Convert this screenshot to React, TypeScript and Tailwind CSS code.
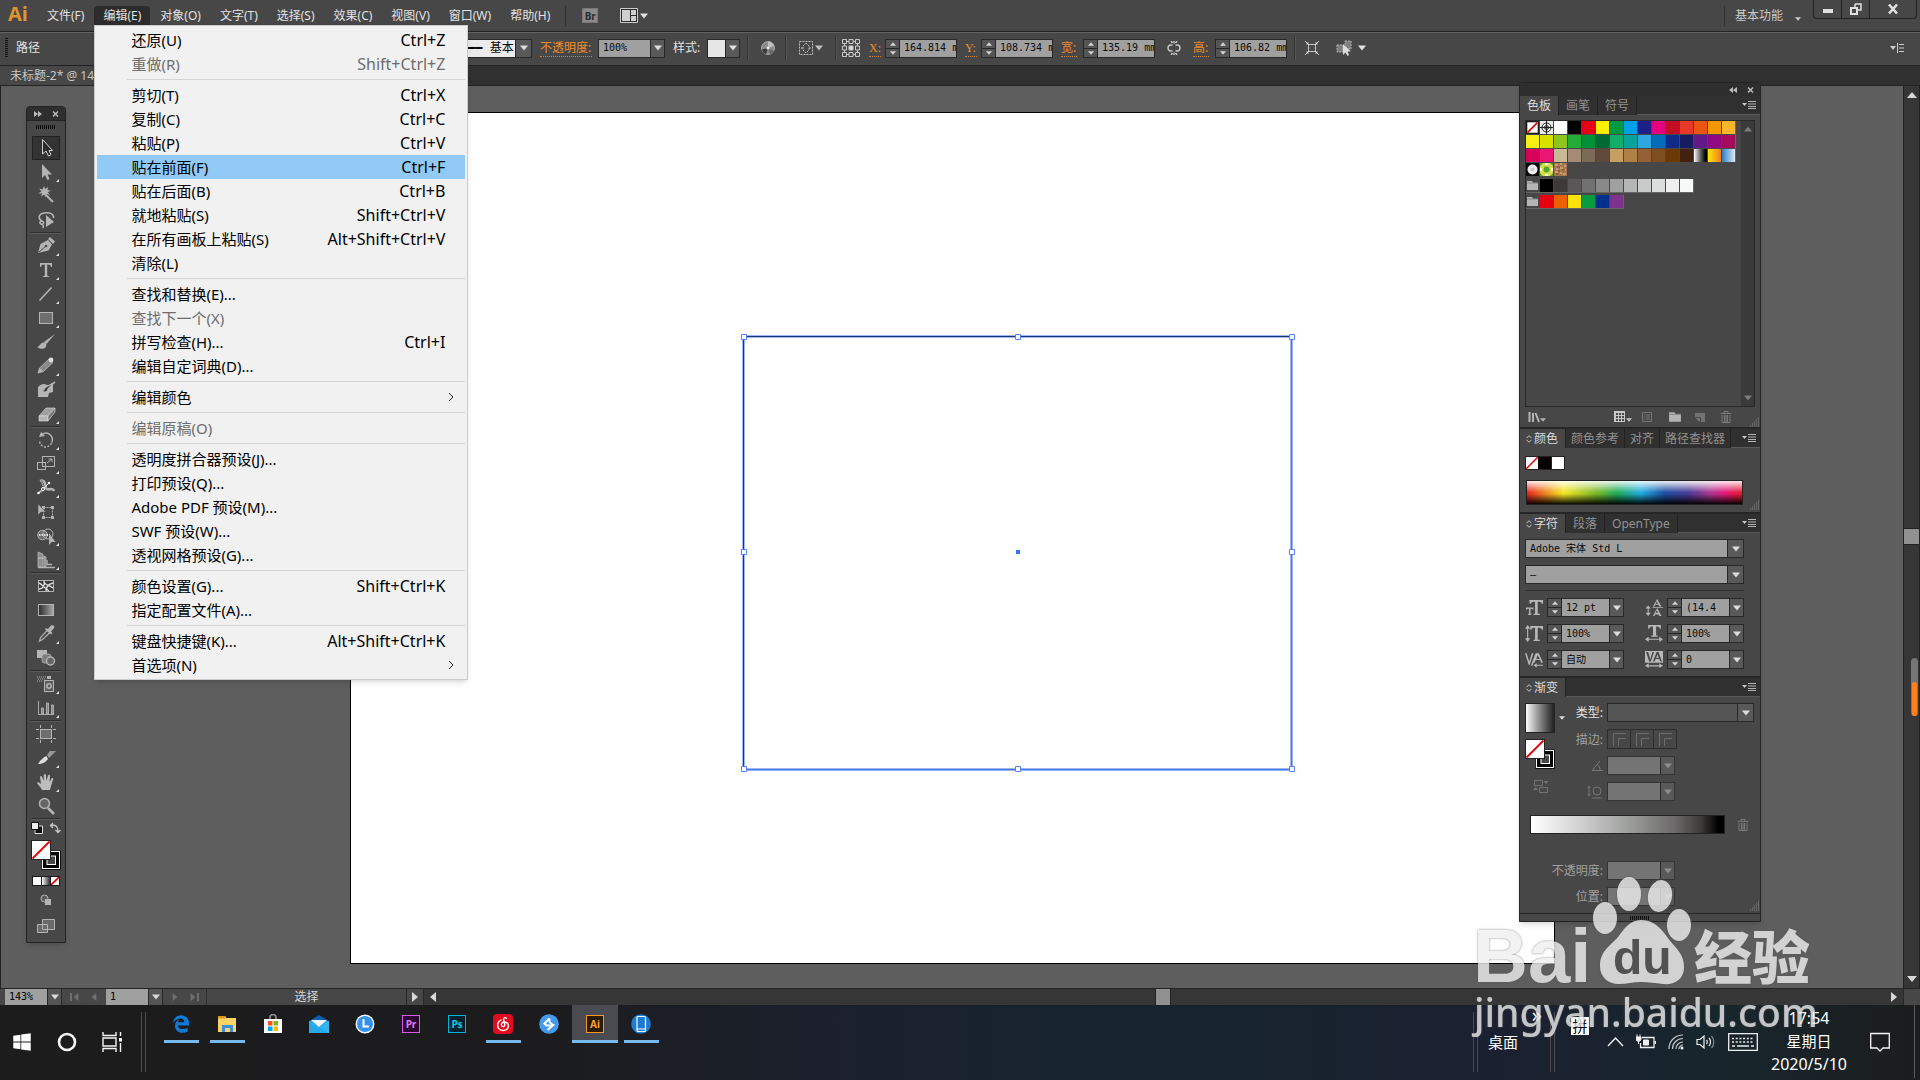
import React from 'react';
import { FaEdgeLegacy, FaWindows } from 'react-icons/fa';
import { SiNeteasecloudmusic } from 'react-icons/si';
import clsx from 'clsx';

type MenuEntry = { label: string; keys?: string; disabled?: boolean; active?: boolean; sub?: boolean };

const MENUS = ['文件(F)', '编辑(E)', '对象(O)', '文字(T)', '选择(S)', '效果(C)', '视图(V)', '窗口(W)', '帮助(H)'];

const EDIT_MENU: MenuEntry[][] = [
  [
    { label: '还原(U)', keys: 'Ctrl+Z' },
    { label: '重做(R)', keys: 'Shift+Ctrl+Z', disabled: true },
  ],
  [
    { label: '剪切(T)', keys: 'Ctrl+X' },
    { label: '复制(C)', keys: 'Ctrl+C' },
    { label: '粘贴(P)', keys: 'Ctrl+V' },
    { label: '贴在前面(F)', keys: 'Ctrl+F', active: true },
    { label: '贴在后面(B)', keys: 'Ctrl+B' },
    { label: '就地粘贴(S)', keys: 'Shift+Ctrl+V' },
    { label: '在所有画板上粘贴(S)', keys: 'Alt+Shift+Ctrl+V' },
    { label: '清除(L)' },
  ],
  [
    { label: '查找和替换(E)...' },
    { label: '查找下一个(X)', disabled: true },
    { label: '拼写检查(H)...', keys: 'Ctrl+I' },
    { label: '编辑自定词典(D)...' },
  ],
  [{ label: '编辑颜色', sub: true }],
  [{ label: '编辑原稿(O)', disabled: true }],
  [
    { label: '透明度拼合器预设(J)...' },
    { label: '打印预设(Q)...' },
    { label: 'Adobe PDF 预设(M)...' },
    { label: 'SWF 预设(W)...' },
    { label: '透视网格预设(G)...' },
  ],
  [
    { label: '颜色设置(G)...', keys: 'Shift+Ctrl+K' },
    { label: '指定配置文件(A)...' },
  ],
  [
    { label: '键盘快捷键(K)...', keys: 'Alt+Shift+Ctrl+K' },
    { label: '首选项(N)', sub: true },
  ],
];

const SWATCH_ROWS: string[][] = [
  [
    'bg-white', 'bg-black', 'bg-[#e60012]', 'bg-[#fff100]', 'bg-[#009944]', 'bg-[#00a0e9]', 'bg-[#1d2088]',
    'bg-[#e4007f]', 'bg-[#c30d23]', 'bg-[#e83828]', 'bg-[#ea5514]', 'bg-[#f39800]', 'bg-[#f8b62d]',
  ],
  [
    'bg-[#f8ee15]', 'bg-[#d9e000]', 'bg-[#8fc31f]', 'bg-[#22ac38]', 'bg-[#009139]', 'bg-[#006934]', 'bg-[#13ae67]',
    'bg-[#0ba29a]', 'bg-[#2ea7e0]', 'bg-[#036eb7]', 'bg-[#102a87]', 'bg-[#171c61]', 'bg-[#601986]', 'bg-[#920783]',
    'bg-[#a40b5d]',
  ],
  [
    'bg-[#d7005b]', 'bg-[#e91674]', 'bg-[#c9ba96]', 'bg-[#a48b78]', 'bg-[#7a6a56]', 'bg-[#604a3b]', 'bg-[#c69f62]',
    'bg-[#b08146]', 'bg-[#956134]', 'bg-[#7e4e21]', 'bg-[#6a3906]', 'bg-[#41210f]',
    'bg-linear-to-r from-white to-black',
    'bg-linear-to-r from-[#ffe600] to-[#ee7b1a]',
    'bg-linear-to-r from-[#1f7fc4] to-[#dcebf5]',
  ],
];

const GRAYS = [
  'bg-black', 'bg-[#3e3a39]', 'bg-[#595757]', 'bg-[#727171]', 'bg-[#898989]', 'bg-[#9fa0a0]', 'bg-[#b5b5b6]',
  'bg-[#c9caca]', 'bg-[#dcdddd]', 'bg-[#efefef]', 'bg-[#f7f8f8]',
];

const BRIGHTS = ['bg-[#e60012]', 'bg-[#eb6100]', 'bg-[#ffe20c]', 'bg-[#0a9a3f]', 'bg-[#00308d]', 'bg-[#7f318e]'];

/* ---------- tool icons, drawn in a 28x24 box ---------- */

const G = '#b4b4b4';

const TOOLS: { name: string; flyout?: boolean; selected?: boolean; icon: React.ReactNode }[][] = [
  [
    { name: '选择工具', selected: true, icon: <path d="M10.500 3.500V18l3.500-3 2.500 5 2.500-1.300-2-4.200h3.500z" fill="#2a2a2a" stroke="#d0d0d0" /> },
    { name: '直接选择工具', flyout: true, icon: <path d="M10 4v14l3-3 2.500 5 2-1-2-4.500h4.500z" fill={G} /> },
    {
      name: '魔棒工具',
      icon: (
        <g>
          <path d="M12 2l1.200 3 3-2-.8 3.200 3.600.3-3.200 1.700 2.200 3-3.300-1.200-.7 3.500-1.900-3-3 2.200 1-3.500-4.100.2 3.400-2-2.200-3 3.500 1z" fill={G} />
          <path d="M14 11l7 7" stroke={G} strokeWidth="2" />
        </g>
      ),
    },
    {
      name: '套索工具',
      icon: (
        <g fill="none" stroke={G} strokeWidth="1.600">
          <path d="M10 13c-4-2-4-7 2-8s10 1 9.500 5M10 13c-2 0-3 2-1 3s3 1 2 4M10 13c2 1 2 2 1 3" />
          <path d="M14 7v12l8-5z" fill={G} stroke="none" />
        </g>
      ),
    },
  ],
  [
    {
      name: '钢笔工具',
      flyout: true,
      icon: (
        <g fill={G}>
          <path d="M6 19l2.500-9L16 6l4 4.500-3.500 6z" />
          <path d="M16 5l2-2 5 4.500-2 2.500z" />
          <path d="M6.500 18.500L14 12" stroke="#474747" />
          <circle cx="14" cy="12" r="1.300" fill="#474747" />
        </g>
      ),
    },
    { name: '文字工具', flyout: true, icon: <path d="M8 5h12v4h-1c-.4-2-1-2.600-3.800-2.600V17c0 1 .6 1.200 2 1.300V19h-6.400v-.7c1.400-.1 2-.3 2-1.300V6.400C10 6.400 9.400 7 9 9H8z" fill={G} /> },
    { name: '直线段工具', flyout: true, icon: <path d="M7.500 18.500l12-13" stroke={G} strokeWidth="1.600" /> },
    { name: '矩形工具', flyout: true, icon: <rect x="7.500" y="6.500" width="13" height="11" fill="#6f6f6f" stroke={G} /> },
    {
      name: '画笔工具',
      icon: (
        <g fill={G}>
          <path d="M23 4l-8.500 10-2.500-2z" />
          <path d="M5 17c3 0 3-4.500 6.500-4.500 2.500 0 3.500 2 2.500 4-1.500 3-6 3-9 .5z" />
        </g>
      ),
    },
    {
      name: '铅笔工具',
      flyout: true,
      icon: (
        <g>
          <path d="M6 19l1.500-5L17 5l4 3.500-9.500 9z" fill="#8a8a8a" stroke={G} strokeWidth=".8" />
          <circle cx="19" cy="6" r="2.400" fill="#dedede" />
          <path d="M6 19l1.500-5 4 3.500z" fill={G} />
        </g>
      ),
    },
    {
      name: '斑点画笔工具',
      icon: (
        <g>
          <path d="M6 9c3-3 6-4 9-2h6v7l-4 1-1 4H6z" fill={G} />
          <path d="M23 4l-7 7c0 3-4 4-6 2 2 0 2-3 4-4z" fill="#3a3a3a" stroke={G} strokeWidth="1.200" />
        </g>
      ),
    },
    {
      name: '橡皮擦工具',
      flyout: true,
      icon: (
        <g stroke="#ddd" strokeWidth=".6">
          <path d="M7 14l7-8h9l-7 8z" fill="#a0a0a0" />
          <path d="M7 14h9v5H7z" fill={G} />
          <path d="M16 14l7-8v4l-7 9z" fill="#777" />
        </g>
      ),
    },
  ],
  [
    {
      name: '旋转工具',
      flyout: true,
      icon: (
        <g>
          <path d="M10 6.500c6-4 12 2 10 8" fill="none" stroke={G} strokeWidth="1.500" />
          <path d="M19.500 15c-3 6-11 5-12-2" fill="none" stroke={G} strokeWidth="1.500" strokeDasharray="2 1.500" />
          <path d="M7 9l2-5 4 4z" fill={G} />
        </g>
      ),
    },
    {
      name: '比例缩放工具',
      flyout: true,
      icon: (
        <g fill="none" stroke={G}>
          <rect x="10.500" y="4.500" width="12" height="10" />
          <rect x="5.500" y="10.500" width="8" height="7" />
          <path d="M15 11l5-4m-3.500 0h3.500v3" />
        </g>
      ),
    },
    {
      name: '宽度工具',
      flyout: true,
      icon: (
        <g>
          <path d="M8 5c5-2 5 3 6 7s6-2 8 3" fill="none" stroke={G} strokeWidth="2.500" />
          <path d="M10 4c-2 4 3 5 2 9s-4 1-5 4" fill="none" stroke="#8a8a8a" strokeWidth="2" />
          <path d="M6.500 17L17 7" stroke="#e5e5e5" />
          <circle cx="6.500" cy="17" r="1.300" fill="#fff" />
          <circle cx="11" cy="13" r="1.500" fill="#555" stroke="#fff" />
          <circle cx="17" cy="7" r="1.300" fill="#fff" />
        </g>
      ),
    },
    {
      name: '自由变换工具',
      icon: (
        <g>
          <rect x="11.500" y="7.500" width="9" height="10" fill="none" stroke={G} strokeDasharray="2 1" />
          <path d="M10 6h3v3h-3zM19 6h3v3h-3zM19 16h3v3h-3zM10 16h3v3h-3z" fill={G} />
          <path d="M6 4v11l3-3h5z" fill={G} stroke="#474747" strokeWidth=".5" />
        </g>
      ),
    },
    {
      name: '形状生成器工具',
      flyout: true,
      icon: (
        <g>
          <circle cx="10.500" cy="11" r="4.800" fill="#6f6f6f" stroke={G} />
          <circle cx="16" cy="10" r="5" fill="none" stroke={G} />
          <path d="M7 11h9" stroke="#fff" strokeWidth="1.500" strokeDasharray="1.500 1" />
          <path d="M17 9v12l2.500-3h4z" fill={G} />
        </g>
      ),
    },
    {
      name: '透视网格工具',
      flyout: true,
      icon: (
        <g>
          <path d="M6 4l5 2v13H6zM12 8l2 1v10h-2z" fill="#8e8e8e" stroke={G} strokeWidth=".8" />
          <path d="M6 10h7M15 12v4.500h5M17.500 14v0M14 19.500h9M6 19.500h17" fill="none" stroke={G} strokeWidth="1.300" />
        </g>
      ),
    },
  ],
  [
    {
      name: '网格工具',
      icon: (
        <g fill="none" stroke={G}>
          <rect x="6.500" y="6.500" width="15" height="11" fill="#3a3a3a" />
          <path d="M7 15c4 0 6-3 5-8M12 8c1 4 4 2 9 6M14 17c0-4 3-7 7-8M7 9c3 1 4 4 10 8" stroke="#dcdcdc" strokeWidth="1.400" />
        </g>
      ),
    },
    {
      name: '渐变工具',
      icon: (
        <g>
          <defs>
            <linearGradient id="toolGrad">
              <stop offset="0" stopColor="#2a2a2a" />
              <stop offset="1" stopColor="#aaa" />
            </linearGradient>
          </defs>
          <rect x="6.500" y="6.500" width="15" height="11" fill="url(#toolGrad)" stroke={G} />
        </g>
      ),
    },
    {
      name: '吸管工具',
      flyout: true,
      icon: (
        <g>
          <path d="M7.500 19l1-3.500L15.500 8l2.500 2.500-7.500 7z" fill="#474747" stroke={G} strokeWidth="1.200" />
          <path d="M14 6l2 1 3-3.500c3-1 4 1 3 2.500L19 9.500l1.500 1.500-1.500 1.500L13 7.500z" fill={G} />
        </g>
      ),
    },
    {
      name: '混合工具',
      icon: (
        <g>
          <path d="M5 4h10v8H5z" fill={G} />
          <rect x="10" y="8" width="9" height="9" rx="2.500" fill="#7d7d7d" stroke={G} strokeWidth=".8" />
          <circle cx="18.500" cy="15" r="4" fill="#666" stroke={G} strokeWidth="1.400" />
        </g>
      ),
    },
  ],
  [
    {
      name: '符号喷枪工具',
      flyout: true,
      icon: (
        <g>
          <path d="M5 5h9M6 7h8M5 9h5" stroke={G} strokeWidth="1.200" strokeDasharray="1 1" />
          <rect x="15" y="4" width="4" height="3" fill={G} />
          <rect x="12.500" y="8.500" width="9" height="11" fill="#5c5c5c" stroke={G} />
          <circle cx="17" cy="14" r="2.200" fill="none" stroke={G} strokeWidth="1.500" />
        </g>
      ),
    },
    {
      name: '柱形图工具',
      flyout: true,
      icon: (
        <g stroke={G} fill="#888" strokeWidth=".9">
          <path d="M6.500 5v13.500H22" fill="none" />
          <path d="M9.500 12h2v6h-2zM14.500 7h2v11h-2zM19.500 9h2v9h-2z" />
        </g>
      ),
    },
  ],
  [
    {
      name: '画板工具',
      icon: (
        <g stroke={G} fill="none">
          <rect x="8.500" y="7.500" width="11" height="9" fill="#6f6f6f" />
          <path d="M8.500 3v3M19.500 3v3M8.500 18v3M19.500 18v3M4 7.500h3M21 7.500h3M4 16.500h3M21 16.500h3" />
        </g>
      ),
    },
    {
      name: '切片工具',
      flyout: true,
      icon: (
        <g>
          <path d="M6 18c2-4 6-7 8.500-8l1.500 3c-3 4-6 5-10 5z" fill="#dcdcdc" />
          <path d="M15 9l3-4h6l-7 7z" fill="#999" />
        </g>
      ),
    },
    {
      name: '抓手工具',
      flyout: true,
      icon: (
        <path
          d="M10 20c-1-3-4-5-5-7 .5-1.500 2-1 4 1L8 7c.5-1.500 1.800-1.200 2.200.2L11.500 11l.3-6c.4-1.500 1.800-1.500 2.200 0l.4 6 1.600-5.500c.6-1.300 2-1 2 .5L17.500 12l2-3.500c.8-1 2-.4 1.700.8L19 16l-1 4z"
          fill="#bdbdbd"
        />
      ),
    },
    {
      name: '缩放工具',
      icon: (
        <g>
          <path d="M16 14l6 6" stroke={G} strokeWidth="2.600" />
          <circle cx="12.500" cy="9.500" r="5" fill="#666" stroke={G} strokeWidth="1.500" />
        </g>
      ),
    },
  ],
];

const NoneMark: React.FC<{ className: string }> = ({ className }) => (
  <svg className={className} viewBox="0 0 20 20" aria-hidden="true">
    <rect x="1" y="1" width="18" height="18" fill="#fff" stroke="#1a1a1a" strokeWidth="2" />
    <path d="M2.500 17.500l15-15" stroke="#e80000" strokeWidth="2.500" />
  </svg>
);

const FillStroke: React.FC = () => (
  <svg className="h-[30px] w-[30px]" viewBox="0 0 30 30" aria-hidden="true">
    <rect x="11" y="11" width="18.500" height="18.500" fill="#fff" stroke="#111" />
    <rect x="12" y="12" width="16.500" height="16.500" fill="#000" />
    <rect x="11.500" y="11.500" width="17" height="17" fill="none" stroke="#fff" />
    <rect x="16" y="16" width="8.500" height="8.500" fill="#474747" stroke="#fff" />
    <rect x=".5" y=".5" width="19" height="19" fill="#fff" stroke="#222" />
    <path d="M1.500 18.500l17-17" stroke="#e80000" strokeWidth="1.800" />
  </svg>
);

const Tri: React.FC<{ dir?: 'down' | 'up' | 'left' | 'right'; className?: string }> = ({ dir = 'down', className }) => {
  const d = { down: 'M0 2h10L5 8z', up: 'M0 8h10L5 2z', left: 'M8 0v10L2 5z', right: 'M2 0v10l6-5z' }[dir];
  return (
    <svg className={clsx('shrink-0 fill-current', className ?? 'size-2')} viewBox="0 0 10 10" aria-hidden="true">
      <path d={d} />
    </svg>
  );
};

const Grip: React.FC = () => (
  <svg className="h-1 w-5" viewBox="0 0 20 4" aria-hidden="true">
    <path d="M0 2h20" stroke="#0d0d0d" strokeWidth="4" strokeDasharray="1 1" />
  </svg>
);

const Corner: React.FC = () => (
  <svg className="size-2.5" viewBox="0 0 10 10" aria-hidden="true">
    <path d="M9 1h1M7 3h3M5 5h5M3 7h7M1 9h9" stroke="#858585" strokeDasharray="1 1" />
  </svg>
);

/* ---------- form fields ---------- */

interface FieldProps {
  id: string;
  label?: string;
  value: string;
  width: string;
  spinner?: boolean;
  dropdown?: boolean;
  dim?: boolean;
}

const Field: React.FC<FieldProps> = ({ id, label, value, width, spinner, dropdown, dim }) => (
  <div className={clsx('flex h-[19px] shrink-0 border', width, dim ? 'border-[#343434]' : 'border-[#282828]')}>
    {spinner && (
      <div className="flex w-3.5 shrink-0 flex-col border-r border-[#282828] bg-[#555] text-[#d5d5d5]">
        <button type="button" aria-label="增加" className="flex flex-1 items-center justify-center border-b border-[#282828]">
          <Tri dir="up" className="size-1.5" />
        </button>
        <button type="button" aria-label="减少" className="flex flex-1 items-center justify-center">
          <Tri className="size-1.5" />
        </button>
      </div>
    )}
    <input
      id={id}
      aria-label={label}
      defaultValue={value}
      disabled={dim}
      className={clsx(
        "min-w-0 flex-1 pl-1 font-['DejaVu_Sans_Mono','Noto_Sans_CJK_SC',monospace] text-[10px] leading-4 text-[#0a0a0a] outline-none",
        dim ? 'bg-[#747474]' : 'bg-[#a0a0a0]',
      )}
    />
    {dropdown && (
      <button
        type="button"
        aria-label="展开"
        className={clsx(
          'flex w-3.5 shrink-0 items-center justify-center border-l border-[#282828] bg-[#595959]',
          dim ? 'text-[#8d8d8d]' : 'text-[#dcdcdc]',
        )}
      >
        <Tri />
      </button>
    )}
  </div>
);

const Picker: React.FC<{ id: string; label: string; value: string; width: string; tone: string }> = ({ id, label, value, width, tone }) => (
  <div className={clsx('relative h-[19px] shrink-0 border border-[#282828] bg-[#a0a0a0]', width)}>
    <select
      id={id}
      aria-label={label}
      className={clsx(
        "block h-full w-full appearance-none px-1 font-['DejaVu_Sans_Mono','Noto_Sans_CJK_SC',monospace] leading-4 text-[#0a0a0a] outline-none",
        tone,
      )}
    >
      <option>{value}</option>
    </select>
    <span className="pointer-events-none absolute inset-y-0 right-0 flex w-4 items-center justify-center border-l border-[#282828] bg-[#595959] text-[#dcdcdc]">
      <Tri />
    </span>
  </div>
);

/* ---------- top bars ---------- */

const EditMenu: React.FC = () => (
  <div role="menu" className="absolute left-0 top-full z-30 w-[374px] border border-[#ccc] bg-[#f1f1f1] p-0.5 text-[15px] text-black shadow-md">
    {EDIT_MENU.map((group, gi) => (
      <div key={gi}>
        {gi > 0 && <div className="my-[3px] ml-[30px] h-px bg-[#d5d5d5]" />}
        {group.map((item) => (
          <button
            key={item.label}
            type="button"
            role="menuitem"
            disabled={item.disabled}
            className={clsx(
              'flex h-6 w-full items-center justify-between pl-[34px] pr-5 leading-[22px]',
              item.active && 'bg-[#91c9f7]',
              item.disabled && 'text-[#6d6d6d]',
            )}
          >
            <span>{item.label}</span>
            {item.keys && <span className="text-base leading-[22px]">{item.keys}</span>}
            {item.sub && (
              <svg className="-mr-3 size-3" viewBox="0 0 12 12" fill="none" stroke="#222" aria-hidden="true">
                <path d="M4 2l4 4-4 4" />
              </svg>
            )}
          </button>
        ))}
      </div>
    ))}
  </div>
);

const MenuBar: React.FC = () => (
  <header className="flex h-8 shrink-0 items-center border-b border-[#242424] bg-[#474747] text-xs text-[#e2e2e2]">
    <div className="w-[38px] shrink-0 pl-2 pb-1 font-['Open_Sans',sans-serif] text-xl font-bold leading-6 text-[#dd962f]">Ai</div>
    <nav className="flex gap-px">
      {MENUS.map((m) => (
        <div key={m} className="relative">
          <button
            type="button"
            className={clsx('h-[19px] whitespace-nowrap px-[9px] leading-[19px]', m === '编辑(E)' && 'rounded-t-sm bg-[#2c2c2c]')}
          >
            {m}
          </button>
          {m === '编辑(E)' && <EditMenu />}
        </div>
      ))}
    </nav>
    <div className="ml-1.5 h-5 w-px bg-[#303030]" />
    <button type="button" aria-label="Bridge" className="ml-4 h-[15px] w-4 border border-[#777] bg-[#8b8b8b] text-[10px] font-bold leading-3 text-[#2d2d2d]">
      Br
    </button>
    <button type="button" aria-label="排列文档" className="ml-[22px] flex items-center gap-0.5">
      <svg className="h-[15px] w-[18px]" viewBox="0 0 18 15" aria-hidden="true">
        <path d="M.5.5h17v14H.5z" fill="#2b2b2b" stroke="#ccc" />
        <path d="M2 2h8v11H2zM11 2h5v5h-5zM11 8h5v5h-5z" fill="#cfcfcf" />
      </svg>
      <Tri />
    </button>
    <div className="ml-auto h-5 w-px bg-[#303030]" />
    <button type="button" className="ml-2.5 flex items-end text-[#cacaca]">
      基本功能
      <Tri className="mb-0.5 ml-3 size-1.5" />
    </button>
    <div className="ml-3 mr-[3px] flex h-[19px] self-start overflow-hidden rounded-b border border-t-0 border-[#222] text-[#e0e0e0]">
      <button type="button" aria-label="最小化" className="flex w-7 items-center justify-center border-r border-[#222]">
        <svg className="size-3" viewBox="0 0 12 12" aria-hidden="true"><path d="M1 6h10v4H1z" fill="currentColor" /></svg>
      </button>
      <button type="button" aria-label="还原" className="flex w-7 items-center justify-center border-r border-[#222]">
        <svg className="size-3.5" viewBox="0 0 14 14" fill="none" stroke="currentColor" strokeWidth="1.500" aria-hidden="true">
          <path d="M6 2h6v6H9M6 2v3" />
          <path d="M2 6h6v6H2z" strokeWidth="2" />
        </svg>
      </button>
      <button type="button" aria-label="关闭" className="flex w-[46px] items-center justify-center">
        <svg className="size-3" viewBox="0 0 12 12" stroke="currentColor" strokeWidth="2.600" aria-hidden="true"><path d="M2 1.500l8 9M10 1.500l-8 9" /></svg>
      </button>
    </div>
  </header>
);

const OrangeLabel: React.FC<{ htmlFor: string; className: string; children: React.ReactNode }> = ({ htmlFor, className, children }) => (
  <label htmlFor={htmlFor} className={clsx('shrink-0 border-b border-dotted border-[#d0812c] leading-4 text-[#ee8c2b]', className)}>
    {children}
  </label>
);

const Divider: React.FC<{ className?: string }> = ({ className }) => (
  <div className={clsx('h-6 w-0.5 shrink-0 border-r border-[#565656] bg-[#333]', className)} />
);

const ControlBar: React.FC = () => (
  <div className="flex h-[34px] shrink-0 items-center overflow-hidden border-b border-t border-b-[#222] border-t-[#636363] bg-[#474747] pb-0.5 pl-[5px] text-xs text-[#e2e2e2]">
    <svg className="h-5 w-[3px] shrink-0" viewBox="0 0 3 20" aria-hidden="true">
      <path d="M1.500 0v20" stroke="#111" strokeWidth="3" strokeDasharray="1 1" />
    </svg>
    <span className="ml-2 w-[447px] shrink-0">路径</span>
    <Picker id="profile" label="画笔定义" value="━━ 基本" width="w-[69px]" tone="bg-[#ececec] text-xs" />
    <OrangeLabel htmlFor="opacity" className="ml-2 w-[52px]">不透明度:</OrangeLabel>
    <div className="ml-1.5"><Field id="opacity" value="100%" width="w-[67px]" dropdown /></div>
    <label htmlFor="style" className="ml-2 w-[30px] shrink-0">样式:</label>
    <div className="ml-1 flex h-[19px] shrink-0 border border-[#282828]">
      <button id="style" type="button" aria-label="图形样式" className="w-[17px] bg-[#e6e6e6]" />
      <button type="button" aria-label="展开" className="flex w-3.5 items-center justify-center border-l border-[#282828] bg-[#595959]">
        <Tri />
      </button>
    </div>
    <Divider className="ml-[7px]" />
    <button type="button" aria-label="重新着色图稿" className="ml-3 shrink-0">
      <svg className="size-3.5" viewBox="0 0 14 14" aria-hidden="true">
        <circle cx="7" cy="7" r="6.500" fill="#8a8a8a" stroke="#a5a5a5" />
        <path d="M7 7V.5A6.500 6.500 0 0 1 13 5z" fill="#c0c0c0" />
        <path d="M7 7l-6.300 1.500A6.500 6.500 0 0 0 5 13.200z" fill="#3c3c3c" />
        <path d="M7 7l6 3a6.500 6.500 0 0 1-4 3.200z" fill="#696969" />
        <circle cx="7" cy="7" r="1.500" fill="#eee" />
      </svg>
    </button>
    <Divider className="ml-2.5" />
    <button type="button" aria-label="对齐" className="ml-3 flex shrink-0 items-center gap-0.5 text-[#bdbdbd]">
      <svg className="size-3.5" viewBox="0 0 14 14" fill="none" stroke="currentColor" aria-hidden="true">
        <rect x=".5" y=".5" width="13" height="13" strokeDasharray="2 1" />
        <path d="M7 2l3 3v4l-3 3-3-3V5zM2 7h2M10 7h2" strokeDasharray="2 1" />
      </svg>
      <Tri />
    </button>
    <Divider className="ml-3" />
    <svg className="ml-1 size-5 shrink-0" viewBox="0 0 20 20" fill="none" stroke="#c8c8c8" aria-hidden="true">
      <path d="M1.500 1.500h4v4h-4zM8 1.500h4v4H8zM14.500 1.500h4v4h-4zM1.500 8h4v4h-4zM14.500 8h4v4h-4zM1.500 14.500h4v4h-4zM8 14.500h4v4H8zM14.500 14.500h4v4h-4z" />
      <path d="M8 8h4v4H8z" fill="#ddd" />
      <path d="M5.500 3.500H8M12 3.500h2.500M5.500 16.500H8M12 16.500h2.500M3.500 5.500V8M3.500 12v2.500M16.500 5.500V8M16.500 12v2.500" />
    </svg>
    <OrangeLabel htmlFor="x" className="ml-2 w-3 font-['Liberation_Serif',serif]">X:</OrangeLabel>
    <div className="ml-1"><Field id="x" value="164.814 mm" width="w-[72px]" spinner /></div>
    <OrangeLabel htmlFor="y" className="ml-2 w-3 font-['Liberation_Serif',serif]">Y:</OrangeLabel>
    <div className="ml-1"><Field id="y" value="108.734 mm" width="w-[72px]" spinner /></div>
    <OrangeLabel htmlFor="w" className="ml-2 w-4">宽:</OrangeLabel>
    <div className="ml-1.5"><Field id="w" value="135.19 mm" width="w-[72px]" spinner /></div>
    <button type="button" aria-label="约束宽度和高度比例" className="ml-3 shrink-0">
      <svg className="size-3.5" viewBox="0 0 14 14" fill="none" stroke="#c8c8c8" strokeWidth="1.400" aria-hidden="true">
        <path d="M5.500 4H4a3 3 0 0 0 0 6h1.500M8.500 4H10a3 3 0 0 1 0 6H8.500M4 0l1.500 2M10 0L8.500 2M7 0v2.500M4 14l1.500-2M10 14l-1.500-2M7 14v-2.500" />
      </svg>
    </button>
    <OrangeLabel htmlFor="h" className="ml-3 w-4">高:</OrangeLabel>
    <div className="ml-1.5"><Field id="h" value="106.82 mm" width="w-[72px]" spinner /></div>
    <Divider className="ml-[7px]" />
    <button type="button" aria-label="变换" className="ml-2 shrink-0">
      <svg className="size-4" viewBox="0 0 16 16" fill="none" stroke="#c8c8c8" aria-hidden="true">
        <rect x="4.500" y="4.500" width="7" height="7" />
        <path d="M1 1l3 3M15 1l-3 3M1 15l3-3M15 15l-3-3M4 2v2H2M12 2v2h2M4 14v-2H2M12 14v-2h2" />
      </svg>
    </button>
    <button type="button" aria-label="选择类似的对象" className="ml-4 flex shrink-0 items-center gap-1.5">
      <svg className="size-4" viewBox="0 0 16 16" aria-hidden="true">
        <path d="M1 5h6v7H1zM9 1h6v8H9z" fill="#7d7d7d" stroke="#b0b0b0" strokeDasharray="2 1" />
        <path d="M7 4v11l2.500-2.500 2 3.500 1.500-1-1.500-3.500H15z" fill="#dcdcdc" />
      </svg>
      <Tri />
    </button>
    <svg className="ml-auto mr-4 h-3 w-3.5 shrink-0" viewBox="0 0 14 12" aria-hidden="true">
      <path d="M0 4h6L3 8z" fill="#ccc" />
      <path d="M7.500 1v10M9 2.500h5M9 6h5M9 9.500h5" stroke="#ccc" />
    </svg>
  </div>
);

/* ---------- floating panels ---------- */

const PanelTop: React.FC<{ left?: boolean }> = ({ left }) => (
  <div className="flex h-[13px] items-center justify-end gap-2.5 rounded-t bg-[#2e2e2e] pr-1.5 text-[#bbb]">
    <svg className="h-1.5 w-2" viewBox="0 0 8 6" aria-hidden="true">
      <path d={left ? 'M0 0v6l4-3zM4 0v6l4-3z' : 'M4 0v6L0 3zM8 0v6L4 3z'} fill="currentColor" />
    </svg>
    <svg className="h-1.5 w-[7px]" viewBox="0 0 7 6" aria-hidden="true">
      <path d="M1 .5l5 5M6 .5l-5 5" stroke="currentColor" strokeWidth="1.500" />
    </svg>
  </div>
);

const ToolsPanel: React.FC = () => (
  <aside className="absolute left-[25px] top-5 w-10 rounded-t border border-[#242424] bg-[#474747] shadow-md" aria-label="工具">
    <PanelTop left />
    <div className="flex h-4 justify-center border-t border-[#242424] pt-1"><Grip /></div>
    {TOOLS.map((group, i) => (
      <div key={i} className="flex flex-col items-center">
        {i > 0 && <div className="h-0.5 w-[30px] border-b border-[#5a5a5a] bg-[#2e2e2e]" />}
        {group.map((t) => (
          <button
            key={t.name}
            type="button"
            aria-label={t.name}
            className={clsx('flex h-6 w-7 items-center justify-center', t.selected && 'border border-[#222] bg-[#333]')}
          >
            <svg className="h-6 w-7 shrink-0" viewBox="0 0 28 24" aria-hidden="true">
              {t.icon}
              {t.flyout && <path d="M27 19v3h-3z" fill="#e0e0e0" />}
            </svg>
          </button>
        ))}
      </div>
    ))}
    <div className="mx-auto h-0.5 w-[30px] border-b border-[#5a5a5a] bg-[#2e2e2e]" />
    <div className="flex h-4 items-center justify-between px-1">
      <button type="button" aria-label="默认填色和描边">
        <svg className="size-3" viewBox="0 0 12 12" aria-hidden="true">
          <path d="M4 4h7.500v7.500H4z" fill="#111" stroke="#ddd" />
          <path d="M.5.5h7v7h-7z" fill="#eee" stroke="#111" />
        </svg>
      </button>
      <button type="button" aria-label="互换填色和描边">
        <svg className="size-3" viewBox="0 0 12 12" fill="none" stroke="#c8c8c8" strokeWidth="1.300" aria-hidden="true">
          <path d="M2 3.500c5-1 7 1 7 6M4 1L1.500 3.500 4 6M6.500 8L9 10.500 11.500 8" />
        </svg>
      </button>
    </div>
    <div className="mt-1 flex justify-center"><FillStroke /></div>
    <div className="mx-auto mt-1.5 flex h-2.5 w-7 border border-[#1a1a1a]">
      <button type="button" aria-label="颜色" className="flex-1 bg-white" />
      <button type="button" aria-label="渐变" className="flex-1 border-x border-[#1a1a1a] bg-linear-to-r from-white to-[#333]" />
      <button type="button" aria-label="无" className="flex-1">
        <svg className="h-2 w-2" viewBox="0 0 8 8" aria-hidden="true"><path d="M0 0h8v8H0z" fill="#fff" /><path d="M0 8l8-8" stroke="#e80000" strokeWidth="1.600" /></svg>
      </button>
    </div>
    <button type="button" aria-label="绘图模式" className="flex h-7 w-full items-center justify-center">
      <svg className="size-3" viewBox="0 0 12 12" aria-hidden="true">
        <circle cx="4.500" cy="4.500" r="3.500" fill="#5e5e5e" stroke={G} />
        <path d="M5 5h6v6H5z" fill={G} />
      </svg>
    </button>
    <button type="button" aria-label="更改屏幕模式" className="mb-1 flex h-6 w-full items-center justify-center">
      <svg className="h-[14px] w-[18px]" viewBox="0 0 18 14" fill="#6a6a6a" stroke={G} aria-hidden="true">
        <path d="M.5 5.500h10v8H.5zM5.500.5h12v10h-12z" />
      </svg>
    </button>
  </aside>
);

const PanelTabs: React.FC<{ tabs: string[]; cycle?: boolean; pad: string }> = ({ tabs, cycle, pad }) => (
  <div role="tablist" className="flex h-[19px] items-stretch bg-[#303030] text-xs leading-[18px] text-[#929292]">
    {tabs.map((t, i) => (
      <button
        key={t}
        type="button"
        role="tab"
        aria-selected={i === 0}
        className={clsx(
          'flex items-center whitespace-nowrap border-r border-[#222]',
          i === 0 && 'bg-[#474747] text-[#dcdcdc]',
          cycle && i === 0 ? 'gap-0.5 pl-1.5 pr-[7px]' : pad,
        )}
      >
        {cycle && i === 0 && (
          <svg className="h-2 w-[6px]" viewBox="0 0 6 8" fill="none" stroke="#c8c8c8" aria-hidden="true">
            <path d="M.5 3.200L3 .7l2.500 2.500M.5 4.800L3 7.300l2.500-2.500" />
          </svg>
        )}
        {t}
      </button>
    ))}
    <span className="flex flex-1 items-center justify-end border-b border-[#5a5a5a] pr-1">
      <svg className="h-2 w-3.5" viewBox="0 0 14 8" aria-hidden="true">
        <path d="M0 2h5L2.500 5z" fill="#c8c8c8" />
        <path d="M6 .5h8M6 3h8M6 5.500h8M6 7.500h8" stroke="#b5b5b5" />
      </svg>
    </span>
  </div>
);

const Swatch: React.FC<{ tone: string }> = ({ tone }) => (
  <button type="button" aria-label="色板" className={clsx('size-[13px]', tone)} />
);

const Folder: React.FC<{ className: string }> = ({ className }) => (
  <svg className={className} viewBox="0 0 13 13" aria-hidden="true">
    <path d="M1 2h5l1 2h5v7H1z" fill="#b5b5b5" />
    <path d="M1 4h11" stroke="#8a8a8a" />
  </svg>
);

const Trash: React.FC<{ className: string }> = ({ className }) => (
  <svg className={className} viewBox="0 0 12 12" fill="none" stroke="#7a7a7a" aria-hidden="true">
    <path d="M.5 2.500h11M4 2V.5h4V2M2 4v7.500h8V4M4.500 4v7M6 4v7M7.500 4v7" />
  </svg>
);

const SwatchesPanel: React.FC = () => (
  <section className="border-b-2 border-[#262626]">
    <PanelTabs tabs={['色板', '画笔', '符号']} pad="px-[7px]" />
    <div className="px-[5px] pt-[5px]">
      <div className="flex h-[287px] border border-[#2a2a2a]">
        <div className="flex flex-1 flex-col items-start">
          <div className="flex flex-col gap-px border-r border-[#666]">
            {SWATCH_ROWS.map((row, i) => (
              <div key={i} className="flex gap-px">
                {i === 0 && (
                  <>
                    <NoneMark className="size-[13px]" />
                    <svg className="size-[13px]" viewBox="0 0 13 13" fill="none" stroke="#222" aria-hidden="true">
                      <path d="M0 0h13v13H0z" fill="#e8e8e8" stroke="none" />
                      <circle cx="6.500" cy="6.500" r="4.500" />
                      <circle cx="6.500" cy="6.500" r="2" />
                      <path d="M6.500 0v13M0 6.500h13" />
                    </svg>
                  </>
                )}
                {row.map((c) => <Swatch key={c} tone={c} />)}
              </div>
            ))}
          </div>
          <div className="mt-px flex gap-px">
            <svg className="size-[13px]" viewBox="0 0 13 13" aria-hidden="true">
              <path d="M0 0h13v13H0z" fill="#0a0a0a" />
              <circle cx="6.500" cy="6.500" r="5" fill="#eee" />
              <circle cx="6.500" cy="6.500" r="2" fill="#ccc" />
            </svg>
            <svg className="size-[13px]" viewBox="0 0 13 13" aria-hidden="true">
              <path d="M0 0h13v13H0z" fill="#d3dc4c" />
              <circle cx="6.500" cy="6.500" r="3" fill="#55a82c" />
              <path d="M0 0h3l-3 3zM13 0v3l-3-3zM0 13v-3l3 3zM13 13h-3l3-3z" fill="#55a82c" />
              <path d="M5 0h3v2H5zM5 11h3v2H5zM0 5h2v3H0zM11 5h2v3h-2z" fill="#fff" />
            </svg>
            <svg className="size-[13px]" viewBox="0 0 13 13" aria-hidden="true">
              <path d="M0 0h13v13H0z" fill="#a8764d" />
              <path d="M1 2h3M6 1h2M10 3h2M2 6h2M6 5h3M11 7h1M1 9h3M6 10h2M9 11h3" stroke="#e0c4a8" />
              <path d="M3 4h3M8 7h2M4 8h2M2 11h2" stroke="#7a4a28" />
            </svg>
          </div>
          <div className="mt-[3px] flex gap-px border-b border-r border-[#666]">
            <Folder className="size-[13px]" />
            {GRAYS.map((c) => <Swatch key={c} tone={c} />)}
          </div>
          <div className="mt-0.5 flex gap-px border-b border-r border-[#666]">
            <Folder className="size-[13px]" />
            {BRIGHTS.map((c) => <Swatch key={c} tone={c} />)}
          </div>
        </div>
        <div className="flex w-[13px] flex-col items-center justify-between bg-[#3a3a3a] py-1 text-[#7c7c7c]">
          <Tri dir="up" />
          <Tri />
        </div>
      </div>
    </div>
    <div className="flex h-5 items-center pl-2 pr-px">
      <button type="button" aria-label="色板库" className="flex items-end text-[#b5b5b5]">
        <svg className="h-3 w-3" viewBox="0 0 12 12" fill="none" stroke="currentColor" strokeWidth="2" aria-hidden="true">
          <path d="M1.500 1v10M5 2v9M7.500 2l3.500 9" />
        </svg>
        <Tri className="size-1.5" />
      </button>
      <button type="button" aria-label="显示色板类型" className="ml-[68px] flex items-end text-[#c8c8c8]">
        <svg className="h-3 w-3" viewBox="0 0 12 12" aria-hidden="true">
          <path d="M0 0h11v11H0z" fill="currentColor" />
          <path d="M2 2h2v2H2zM5 2h2v2H5zM8 2h2v2H8zM2 5h2v2H2zM5 5h2v2H5zM2 8h2v2H2zM5 8h2v2H5zM8 8h2v2H8zM8 5h2v2H8z" fill="#4a4a4a" />
        </svg>
        <Tri className="size-1.5" />
      </button>
      <svg className="ml-2.5 size-2.5" viewBox="0 0 10 10" fill="none" stroke="#757575" aria-hidden="true">
        <path d="M.5.5h9v9h-9zM2 3h1M4 3h4M2 5h1M4 5h4M2 7h1M4 7h4" />
      </svg>
      <Folder className="ml-4 size-3.5" />
      <svg className="ml-3 size-3" viewBox="0 0 12 12" aria-hidden="true">
        <path d="M1 2h10v9H7V6H1z" fill="#727272" />
        <path d="M1 7h5v4z" fill="#727272" />
      </svg>
      <Trash className="ml-3.5 size-3" />
      <span className="ml-auto self-end"><Corner /></span>
    </div>
  </section>
);

const ColorPanel: React.FC = () => (
  <section className="border-b-2 border-[#262626]">
    <PanelTabs tabs={['颜色', '颜色参考', '对齐', '路径查找器']} cycle pad="px-[5px]" />
    <div className="relative px-[5px] pb-[7px] pt-2">
      <div className="flex h-3.5 w-10 border border-[#222]">
        <svg className="size-3" viewBox="0 0 12 12" aria-hidden="true">
          <path d="M0 0h12v12H0z" fill="#fff" />
          <path d="M0 12L12 0" stroke="#e80000" strokeWidth="1.500" />
        </svg>
        <button type="button" aria-label="黑色" className="flex-1 bg-[#060203]" />
        <button type="button" aria-label="白色" className="flex-1 border-l border-[#222] bg-white" />
      </div>
      <div className="ml-px mt-2.5 h-[25px] w-[217px] border border-[#222] bg-[linear-gradient(to_right,#e8251f,#f6e824_17%,#7fba28_32%,#20ad5b_42%,#20ace0_53%,#1d4fa3_64%,#4b3a97_75%,#a93a92_85%,#e5197f_92%,#e51c28)]">
        <div className="h-full bg-[linear-gradient(to_bottom,rgba(255,255,255,0.9),rgba(255,255,255,0)_50%,rgba(0,0,0,0)_55%,rgba(0,0,0,0.95))]" />
      </div>
      <span className="absolute bottom-0.5 right-px"><Corner /></span>
    </div>
  </section>
);

const CHAR_FIELDS: { id: string; label: string; value: string; icon: React.ReactNode }[] = [
  { id: 'size', label: '字体大小', value: '12 pt', icon: <path d="M4 1h13v3.500h-1C15.500 3 15 2.500 12 2.500V14h2v1H8v-1h1.500V2.500C6.500 2.500 6 3 5.500 4.500h-1zM1 8h7v2H7l-.5-.8H5.200V14H6v1H3v-1h.8V9.200H2.500L2 10H1z" /> },
  { id: 'leading', label: '行距', value: '(14.4', icon: <path d="M11.500 0l4 7h-2l-.7-1.500H9.500L9 7H7.500zM11 2l-1 2.500h2.300zM11.500 8.500l4 7.500h-2l-.7-1.500H9.500L9 16H7.500zM11 10.500L10 13h2.300zM7 7.500h10v.8H7zM3 6l2.500 3h-2v4h2L3 16 .5 13h2V9h-2z" /> },
  { id: 'vscale', label: '垂直缩放', value: '100%', icon: <path d="M5 1h12v3.500h-1C15.500 3 15 2.500 12 2.500V14h2v1H8v-1h1.500V2.500C7 2.500 6.500 3 6 4.500H5zM2.500 0L5 3.500H3v9h2L2.500 16 0 12.500h2v-9H0z" /> },
  { id: 'hscale', label: '水平缩放', value: '100%', icon: <path d="M3 0h12v3.500h-1c-.5-1.500-1-2-3.500-2V10H12v1H6v-1h1.500V1.500C5 1.500 4.500 2 4 3.500H3zM0 13.500L3.500 11v2h10v-2l3.500 2.500-3.500 2.500v-2h-10v2z" /> },
  { id: 'kern', label: '字偶间距', value: '自动', icon: <path d="M0 2h1.500l2.500 8 2.500-8H8l-3.500 11h-1zM10 2h1.500L7 14H5.500zM11.500 2h1.500l4 9h-1.800l-1-2.500H10L9 11H7.500zM12 4l-1.500 3.500H14zM8 13.500l3-2v1.500h6v1h-6v1.500z" /> },
  { id: 'track', label: '字符间距', value: '0', icon: <path fillRule="evenodd" d="M0 0h17v11H0zM1 1l3 9h1.500l3-9H7L5 8 3 1zM11 1L7.500 10H9l1-2.500h3.500l1 2.500H16L12.700 1zM11.800 3L13 6.500h-2.500zM0 14l3.500-2.500v2h10v-2L17 14l-3.500 2v-1.500h-10V16z" /> },
];

const CharacterPanel: React.FC = () => (
  <section className="border-b-2 border-[#262626]">
    <PanelTabs tabs={['字符', '段落', 'OpenType']} cycle pad="px-[7px]" />
    <div className="px-[5px] pb-[7px] pt-1.5">
      <Picker id="family" label="字体系列" value="Adobe 宋体 Std L" width="w-[219px]" tone="bg-[#a0a0a0] text-[10px]" />
      <div className="mt-[7px]">
        <Picker id="fontStyle" label="字体样式" value="–" width="w-[219px]" tone="bg-[#a0a0a0] text-[10px]" />
      </div>
      <div className="mt-1.5 h-px w-[219px] bg-[#303030]" />
      <div className="mt-[7px] grid w-[219px] grid-cols-[99px_99px] gap-x-[21px] gap-y-[7px]">
        {CHAR_FIELDS.map((f) => (
          <div key={f.id} className="flex items-center">
            <svg className="mr-1 h-[17px] w-[18px] shrink-0" viewBox="0 0 17 16" fill="#b8b8b8" aria-hidden="true">{f.icon}</svg>
            <Field id={f.id} label={f.label} value={f.value} width="w-[77px]" spinner dropdown />
          </div>
        ))}
      </div>
    </div>
  </section>
);

const GradientPanel: React.FC = () => (
  <section className="border-b border-[#262626]">
    <PanelTabs tabs={['渐变']} cycle pad="px-[7px]" />
    <div className="relative px-[5px] pb-[7px] pt-1.5 text-xs text-[#a0a0a0]">
      <div className="flex">
        <div className="w-10 shrink-0">
          <div className="flex items-center gap-1 text-[#ddd]">
            <button type="button" aria-label="渐变填色" className="h-[30px] w-[30px] border border-[#222] bg-linear-to-r from-white to-[#222]" />
            <Tri className="size-1.5" />
          </div>
          <div className="mt-1.5"><FillStroke /></div>
          <svg className="ml-2 mt-2.5 h-3.5 w-4" viewBox="0 0 16 14" fill="none" stroke="#737373" aria-hidden="true">
            <path d="M1.500 1.500h8v5h-8zM6.500 8.500h8v5h-8z" />
            <path d="M10.500 2h5L13 5zM0 11h5L2.500 8z" fill="#737373" stroke="none" />
          </svg>
        </div>
        <div className="grid flex-1 grid-cols-[38px_1fr] items-center gap-x-1 gap-y-[7px] leading-[19px]">
          <label htmlFor="gtype" className="whitespace-nowrap text-right text-[#e2e2e2]">类型:</label>
          <Picker id="gtype" label="类型" value="" width="w-[147px]" tone="bg-[#555] text-[10px]" />
          <span className="text-right">描边:</span>
          <div className="flex h-5 w-[70px] divide-x divide-[#2d2d2d] border border-[#2d2d2d]">
            {['在描边中应用渐变', '沿描边应用渐变', '跨描边应用渐变'].map((n) => (
              <button key={n} type="button" disabled aria-label={n} className="flex flex-1 items-center justify-center">
                <svg className="size-3.5" viewBox="0 0 14 14" fill="none" stroke="#6c6c6c" aria-hidden="true">
                  <path d="M1.500 14V1.500H14M6.500 14V6.500H14" />
                </svg>
              </button>
            ))}
          </div>
          <svg className="h-3 w-3 justify-self-end" viewBox="0 0 12 12" fill="none" stroke="#757575" aria-hidden="true">
            <path d="M9 1L1 10.500h11M6 4.500c2 1 3 3 3 6" />
          </svg>
          <Field id="angle" label="角度" value="" width="w-[68px]" dropdown dim />
          <svg className="h-3.5 w-4 justify-self-end" viewBox="0 0 16 14" fill="none" stroke="#757575" aria-hidden="true">
            <circle cx="10" cy="6" r="4" />
            <path d="M2 1v10M.5 3L2 1l1.500 2M.5 9L2 11l1.500-2M5 13h10" />
          </svg>
          <Field id="aspect" label="长宽比" value="" width="w-[68px]" dropdown dim />
        </div>
      </div>
      <div className="mt-3.5 flex items-center">
        <div className="ml-[5px] h-[19px] w-[195px] border border-[#222] bg-[linear-gradient(to_right,#fff,#c8c8c8_30%,#9a9c9a_52%,#6a6868_75%,#3e3a39_88%,#000_97%)]" />
        <Trash className="ml-3 size-3" />
      </div>
      <div className="mt-[27px] grid grid-cols-[78px_1fr] items-center gap-x-1 gap-y-[7px] leading-[19px]">
        <label htmlFor="gop" className="text-right">不透明度:</label>
        <Field id="gop" value="" width="w-[68px]" dropdown dim />
        <label htmlFor="gpos" className="text-right">位置:</label>
        <Field id="gpos" value="" width="w-[68px]" dropdown dim />
      </div>
      <span className="absolute bottom-0.5 right-px"><Corner /></span>
    </div>
  </section>
);

const Dock: React.FC = () => (
  <aside className="absolute -top-1 right-[159px] w-[242px] rounded-t border border-[#242424] bg-[#474747] shadow-md">
    <PanelTop />
    <SwatchesPanel />
    <ColorPanel />
    <CharacterPanel />
    <GradientPanel />
    <div className="flex h-[7px] items-center justify-center"><Grip /></div>
  </aside>
);

const Workspace: React.FC = () => (
  <main className="relative flex min-h-0 flex-1 border-l border-[#222]">
    <div className="relative min-w-0 flex-1 bg-[#5e5e5e]">
      {/* artboard with the selected rectangle */}
      <div className="absolute left-[349px] top-[26px] h-[852px] w-[1205px] border border-black bg-white">
        <svg className="absolute left-[389px] top-[219px] h-[440px] w-[555px]" viewBox="0 0 555 440" fill="none" aria-hidden="true">
          <path d="M3.500 4.500h548v433h-548z" stroke="#4373e4" strokeWidth="2" />
          <path d="M3 4.500h549M3.500 4v433" stroke="#1c3576" />
          <g fill="#fff" stroke="#4f80ff">
            <path d="M1.500 2.500h5v5h-5zM275.500 2.500h5v5h-5zM549.500 2.500h5v5h-5z" />
            <path d="M1.500 217.500h5v5h-5zM549.500 217.500h5v5h-5z" />
            <path d="M1.500 434.500h5v5h-5zM275.500 434.500h5v5h-5zM549.500 434.500h5v5h-5z" />
          </g>
          <path d="M276 218h4v4h-4z" fill="#3d70e8" />
        </svg>
      </div>
    </div>
    <div className="relative flex w-[17px] shrink-0 flex-col items-center border-x border-[#222] bg-[#363636] py-1 text-[#d8d8d8]">
      <Tri dir="up" className="size-2.5" />
      <div className="mt-[428px] h-[17px] w-full border-y border-[#222] bg-[#909090]" />
      <Tri className="mt-auto size-2.5" />
      <div className="absolute right-px top-[572px] flex h-[58px] w-[7px] flex-col justify-end rounded-full bg-[#757575] px-px">
        <div className="h-[34px] rounded-full bg-[#ff7f1a]" />
      </div>
    </div>
    <ToolsPanel />
  </main>
);

const StatusBar: React.FC = () => (
  <div className="flex h-[17px] shrink-0 items-stretch border-t border-[#242424] bg-[#474747] pl-[5px] text-xs text-[#d8d8d8]">
    <input aria-label="缩放" defaultValue="143%" className="w-[42px] bg-[#a0a0a0] px-1 font-['DejaVu_Sans_Mono',monospace] text-[10px] text-black" />
    <button type="button" aria-label="展开" className="flex w-[15px] items-center justify-center border-x border-[#282828] bg-[#555]"><Tri /></button>
    <div className="flex w-11 items-center justify-center gap-2.5 text-[#6e6e6e]">
      <button type="button" aria-label="首项" className="flex"><span className="h-2 w-0.5 bg-current" /><Tri dir="left" /></button>
      <button type="button" aria-label="上一项"><Tri dir="left" /></button>
    </div>
    <input aria-label="画板" defaultValue="1" className="w-[42px] bg-[#a0a0a0] px-1 font-['DejaVu_Sans_Mono',monospace] text-[10px] text-black" />
    <button type="button" aria-label="展开" className="flex w-[15px] items-center justify-center border-x border-[#282828] bg-[#555]"><Tri /></button>
    <div className="flex w-[43px] items-center justify-center gap-2.5 text-[#6e6e6e]">
      <button type="button" aria-label="下一项"><Tri dir="right" /></button>
      <button type="button" aria-label="末项" className="flex"><Tri dir="right" /><span className="h-2 w-0.5 bg-current" /></button>
    </div>
    <div className="flex w-[200px] items-center justify-center border-l border-[#303030] leading-4">选择</div>
    <button type="button" aria-label="状态" className="flex w-[18px] items-center justify-center border-x border-[#282828]"><Tri dir="right" className="size-2.5" /></button>
    <div className="relative flex flex-1 items-center justify-between bg-[#363636] px-1">
      <Tri dir="left" className="size-2.5" />
      <div className="absolute inset-y-0 left-[731px] w-4 border-x border-[#222] bg-[#909090]" />
      <Tri dir="right" className="size-2.5" />
    </div>
    <div className="w-[17px] border-l border-[#282828]" />
  </div>
);

/* ---------- taskbar ---------- */

const AdobeTile: React.FC<{ text: string; tone: string }> = ({ text, tone }) => (
  <span className={clsx('flex h-[18px] w-[18px] items-center justify-center border text-[10px] font-bold leading-none', tone)}>{text}</span>
);

const APPS: { name: string; open?: boolean; active?: boolean; icon: React.ReactNode }[] = [
  { name: 'Edge', open: true, icon: <FaEdgeLegacy className="size-[18px] text-[#0f7ad8]" /> },
  {
    name: '文件资源管理器',
    open: true,
    icon: (
      <svg className="size-5" viewBox="0 0 20 20">
        <path d="M1 2h7l1.500 2H19v14H1z" fill="#fcd462" />
        <path d="M1 2h7l1 2.500H1z" fill="#d99a1c" />
        <path d="M5 18v-7h11v7h-3v-4H8v4z" fill="#3f8fdd" />
      </svg>
    ),
  },
  {
    name: 'Microsoft Store',
    icon: (
      <svg className="size-5" viewBox="0 0 20 20">
        <path d="M7 6V3.500a3 3 0 0 1 6 0V6" fill="none" stroke="#9a9a9a" strokeWidth="1.500" />
        <path d="M1 5h18v14H1z" fill="#fff" />
        <path d="M5 7h4.500v4.500H5z" fill="#f25022" />
        <path d="M10.500 7H15v4.500h-4.500z" fill="#7fba00" />
        <path d="M5 12.500h4.500V17H5z" fill="#00a4ef" />
        <path d="M10.500 12.500H15V17h-4.500z" fill="#ffb900" />
      </svg>
    ),
  },
  {
    name: '邮件',
    icon: (
      <svg className="size-5" viewBox="0 0 20 20">
        <path d="M0 7l10-6 10 6z" fill="#0e5fae" />
        <path d="M0 7h20v12H0z" fill="#28a8ea" />
        <path d="M2 6h16l-8 7z" fill="#f2f8fd" />
        <path d="M0 7l10 7L20 7v12z" fill="#35b8f1" />
      </svg>
    ),
  },
  {
    name: '浏览器',
    icon: (
      <svg className="size-5" viewBox="0 0 20 20">
        <circle cx="10" cy="10" r="9.500" fill="#f5f9ff" />
        <circle cx="10" cy="10" r="8" fill="#3492ee" />
        <path d="M8.500 5v7.500H14" fill="none" stroke="#fff" strokeWidth="2" />
      </svg>
    ),
  },
  { name: 'Premiere', icon: <AdobeTile text="Pr" tone="border-[#d65ce8] bg-[#2a0634] text-[#e07cf0]" /> },
  { name: 'Photoshop', icon: <AdobeTile text="Ps" tone="border-[#06b4d4] bg-[#04222e] text-[#10c8ec]" /> },
  {
    name: '网易云音乐',
    open: true,
    icon: (
      <span className="flex size-5 items-center justify-center rounded bg-[#e20a20] text-white">
        <svg className="size-4" viewBox="0 0 16 16" fill="none" stroke="currentColor" strokeWidth="1.400" strokeLinecap="round">
          <path d="M11.500 2.200C10 1 8.300 1.800 8.600 3.500l1.200 5c.4 2.500-3.300 2.900-3.400.4C6.300 6.800 8 6 9.500 6c3 .2 4.300 2.300 3.800 4.700C12.800 13 10.800 14.500 8.200 14.500 5 14.500 2.700 12.200 2.700 9.200c0-2.400 1.300-4.200 3.300-5" />
        </svg>
      </span>
    ),
  },
  {
    name: '蓝牙音箱',
    icon: (
      <svg className="size-5" viewBox="0 0 20 20">
        <circle cx="10" cy="10" r="9.800" fill="#429bef" />
        <path d="M10.500 4.500L5.500 9.500l2 2h6L8.500 16" fill="none" stroke="#fff" strokeWidth="2.200" />
        <path d="M10.500 4.500V8l4 3.500" fill="none" stroke="#fff" strokeWidth="1.800" />
      </svg>
    ),
  },
  { name: 'Illustrator', open: true, active: true, icon: <AdobeTile text="Ai" tone="border-[#f09a2c] bg-[#2b1a05] text-[#f6a034]" /> },
  {
    name: '手机助手',
    open: true,
    icon: (
      <svg className="size-5" viewBox="0 0 20 20">
        <circle cx="10" cy="10" r="9.800" fill="#1c7bd4" />
        <rect x="6" y="2.500" width="8.500" height="15" rx="1" fill="#1c7bd4" stroke="#fff" strokeWidth="1.200" />
        <path d="M6 15h8.500" stroke="#fff" />
      </svg>
    ),
  },
];

const DoubleRule: React.FC<{ className?: string }> = ({ className }) => (
  <div className={clsx('h-[60px] w-[5px] shrink-0 self-center border-x border-[#4c4c4f]', className)} />
);

const Taskbar: React.FC = () => (
  <footer className="flex h-[75px] shrink-0 items-center bg-[linear-gradient(to_right,#1c1c1d,#1c1c1e_28%,#1b202c_42%,#15242e_60%,#1b2030_78%,#17262c_90%,#1c1c1d)] pb-0.5 text-white">
    <button type="button" aria-label="开始" className="ml-3 shrink-0"><FaWindows className="size-5" /></button>
    <button type="button" aria-label="Cortana" className="ml-[25px] shrink-0">
      <svg className="size-5" viewBox="0 0 20 20" fill="none"><circle cx="10" cy="10" r="8" stroke="#f5f5f5" strokeWidth="2.600" /></svg>
    </button>
    <button type="button" aria-label="任务视图" className="ml-[25px] shrink-0">
      <svg className="size-5" viewBox="0 0 20 20" fill="none" stroke="#f5f5f5" strokeWidth="1.400">
        <path d="M1 6h13v8H1zM1 0v3.500h13V0M1 20v-3.500h13V20M18.500 0v4M18.500 11v9" />
        <path d="M17 6h3v3.500h-3z" fill="#f5f5f5" stroke="none" />
      </svg>
    </button>
    <DoubleRule className="ml-[19px]" />
    <ul className="ml-3 flex self-start">
      {APPS.map((a) => (
        <li key={a.name} className={clsx('flex h-[38px] w-[46px] flex-col items-center', a.active && 'bg-[#4a4b50]')}>
          <button type="button" aria-label={a.name} className="flex h-[35px] w-full items-center justify-center pt-0.5">{a.icon}</button>
          {a.open && <span className={clsx('h-[3px] bg-[#76b9ed]', a.active ? 'w-full' : 'w-[35px]')} />}
        </li>
      ))}
    </ul>
    <DoubleRule className="ml-auto" />
    <div className="ml-2.5 flex h-full w-[62px] shrink-0 flex-col text-sm">
      <span className="h-[25px] self-end pr-2 text-xl leading-5">»</span>
      <span className="text-[15px] leading-6">桌面</span>
    </div>
    <DoubleRule />
    <button type="button" aria-label="输入法" className="ml-4 mt-3 size-[18px] shrink-0 self-start bg-white text-[15px] leading-[18px] text-black">拼</button>
    <div className="ml-[18px] flex shrink-0 items-center gap-3 text-[#f0f0f0]">
      <svg className="h-4 w-[17px]" viewBox="0 0 17 16" fill="none" stroke="currentColor" strokeWidth="1.400"><path d="M1 12l7.500-8 7.500 8" /></svg>
      <svg className="h-4 w-5" viewBox="0 0 20 16" fill="none" stroke="currentColor">
        <path d="M6 3.500h12v10H4.500V9M19.500 7v3" strokeWidth="1.300" />
        <path d="M0 3h5v2c0 3-5 3-5 0zM1 .5v2.500M4 .5v2.500M2.500 7v3M7.500 6h5v5h-5z" fill="currentColor" />
      </svg>
      <svg className="h-4 w-4" viewBox="0 0 16 16" fill="none" stroke="currentColor" strokeWidth="1.200">
        <path d="M1 15C1 7 7 1 15 1M4.500 15C4.500 9 9 4.500 15 4.500M8 15c0-4 3-7 7-7M11 15c0-2 2-4 4-4" opacity=".8" />
        <circle cx="14" cy="14" r="1.500" fill="currentColor" stroke="none" />
      </svg>
      <svg className="h-4 w-5" viewBox="0 0 20 16" fill="none" stroke="currentColor" strokeWidth="1.200">
        <path d="M1 5.500h3L8 2v12l-4-3.500H1zM10.500 6c1 1 1 3 0 4M13 4c2 2 2 6 0 8" />
        <path d="M15.500 2c3 3 3 9 0 12" opacity=".5" />
      </svg>
      <svg className="h-[18px] w-[30px]" viewBox="0 0 30 18" fill="none" stroke="currentColor" strokeWidth="1.300">
        <path d="M.7.7h28.600v16.600H.7z" />
        <path d="M4 5.500h22M4 9h22" strokeDasharray="2 1.700" />
        <path d="M4 13h3M9 13h12M23 13h3" />
      </svg>
    </div>
    <div className="ml-3 flex w-[78px] shrink-0 flex-col items-center text-base leading-[23px]">
      <span>17:54</span>
      <span className="text-[15px] leading-[23px]">星期日</span>
      <span>2020/5/10</span>
    </div>
    <button type="button" aria-label="通知" className="ml-[22px] shrink-0">
      <svg className="size-5" viewBox="0 0 20 20" fill="none" stroke="#f5f5f5" strokeWidth="1.300"><path d="M.7 1.500h18.600v14.500H13l-3 3-3-3H.7z" /></svg>
    </button>
    <div className="ml-6 mr-[5px] h-full w-px bg-[#5a5a5a]" />
  </footer>
);

const Watermark: React.FC = () => (
  <svg
    className="pointer-events-none absolute bottom-10 right-[98px] z-40 h-[164px] w-[352px] opacity-80 drop-shadow-[0_0_1px_rgba(80,80,80,0.8)]"
    viewBox="0 0 352 164"
    fill="#efefef"
    aria-label="Baidu 经验"
  >
    <text x="3" y="106" fontFamily="Liberation Sans" fontWeight="700" fontSize="76">Bai</text>
    <ellipse cx="135" cy="42" rx="12" ry="16" />
    <ellipse cx="159" cy="18" rx="12" ry="17" />
    <ellipse cx="190" cy="20" rx="12" ry="16" transform="rotate(10 190 20)" />
    <ellipse cx="209" cy="49" rx="12" ry="16" />
    <path d="M171 44c14 0 22 11 27 18 6 9 17 15 16 31-1 11-10 16-21 15-8-1-14-2-22-2s-14 2-22 2c-11 0-19-7-19-18 0-15 10-20 18-29 6-8 12-17 23-17z" />
    <text x="143" y="98" fontFamily="Liberation Sans" fontWeight="700" fontSize="48" fill="#505050">du</text>
    <text x="224" y="103" fontFamily="Noto Sans CJK SC" fontWeight="900" fontSize="58">经验</text>
    <text x="4" y="151" fontFamily="Noto Sans" fontWeight="500" fontSize="39">jingyan.baidu.com</text>
  </svg>
);

const App: React.FC = () => (
  <div className="relative flex h-screen w-full flex-col overflow-hidden bg-[#5e5e5e] font-['Noto_Sans','Noto_Sans_CJK_SC',sans-serif]">
    <MenuBar />
    <ControlBar />
    <div className="flex h-5 shrink-0 border-b border-[#242424] bg-[#303030] text-xs leading-5 text-[#c8c8c8]">
      <span className="whitespace-nowrap bg-[#474747] px-2.5">未标题-2* @ 143%</span>
    </div>
    <div className="relative flex min-h-0 flex-1">
      <Workspace />
      <Dock />
    </div>
    <StatusBar />
    <Taskbar />
    <Watermark />
  </div>
);

export default App;
